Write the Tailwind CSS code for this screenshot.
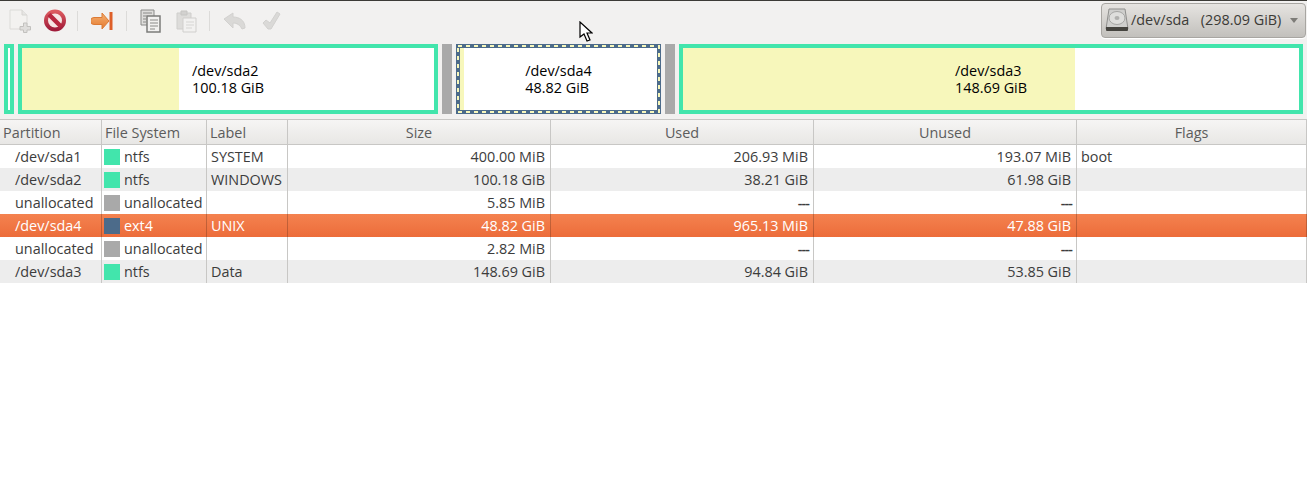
<!DOCTYPE html>
<html lang="en">
  <head>
    <meta charset="UTF-8" />
    <script src="https://cdn.jsdelivr.net/npm/@tailwindcss/browser@4"></script>
    <title>GParted</title>
  </head>
  <body class="relative h-[493px] w-[1307px] overflow-hidden bg-white text-[14.4px] text-[#3c3c3c] font-['Open_Sans',sans-serif]">
    <!-- toolbar -->
    <div class="flex h-[40px] items-center border-t border-[#3c3b37] bg-[#f2f1f0] pl-[9px] pr-px">
      <svg class="h-[24px] w-[22px]" viewBox="0 0 22 24">
        <path d="M1 1h12l5 5v14H1z" fill="#f3f2f0" stroke="#dcdbd8" />
        <path d="M13 1v5h5" fill="#e6e5e3" stroke="#d6d5d2" />
        <path d="M14.5 14h3.5v3.5h3.5V21H18v2.500h-3.500V21H11v-3.500h3.500z" fill="#dfdedc" stroke="#c2c1be" />
      </svg>
      <svg class="ml-[12px] h-[24px] w-[24px]" viewBox="0 0 24 24">
        <defs>
          <linearGradient id="stop" x1="0" y1="0" x2="0" y2="1">
            <stop offset="0" stop-color="#dc5a5f" />
            <stop offset="1" stop-color="#a01c3a" />
          </linearGradient>
          <linearGradient id="arrow" x1="0" y1="0" x2="0" y2="1">
            <stop offset="0" stop-color="#f4b070" />
            <stop offset="1" stop-color="#e57a30" />
          </linearGradient>
        </defs>
        <circle cx="12" cy="11.500" r="9" fill="#f6e6e4" stroke="url(#stop)" stroke-width="4" />
        <path d="M6 5.500l12 12" stroke="#b8283f" stroke-width="4.500" />
      </svg>
      <div class="ml-[10px] h-[20px] w-px bg-[#dcdbd9]"></div>
      <svg class="ml-[13px] h-[20px] w-[23px]" viewBox="0 0 23 20">
        <path d="M3 6.500h8V2l7 8-7 8v-4.500H3a3.500 3.500 0 0 1 0-7z" fill="url(#arrow)" stroke="#dc7a34" />
        <path d="M20 1v18" stroke="#de5f28" stroke-width="3" />
      </svg>
      <div class="ml-[12px] h-[20px] w-px bg-[#dcdbd9]"></div>
      <svg class="ml-[13px] h-[24px] w-[21px]" viewBox="0 0 21 24">
        <path d="M1 1h13v15H1z" fill="#dedddb" stroke="#8a8a88" />
        <path d="M7 7h13v16H7z" fill="#f2f1f0" stroke="#7c7c7a" stroke-width="1.500" />
        <path d="M3 4h9M3 7h3M3 10h3M3 13h3M10 11h8M10 14h8M10 17h8M10 20h5" stroke="#8a8a88" />
      </svg>
      <svg class="ml-[15px] h-[24px] w-[21px]" viewBox="0 0 21 24">
        <path d="M1 4h14v16H1z" fill="#dddcda" stroke="#cfcecc" />
        <path d="M5 2h6v4H5z" fill="#d2d1cf" stroke="#c6c5c3" />
        <path d="M7 9h13v14H7z" fill="#f2f1f0" stroke="#d0cfcd" />
        <path d="M10 13h8M10 16h8M10 19h6" stroke="#d6d5d3" />
      </svg>
      <div class="ml-[12px] h-[20px] w-px bg-[#dcdbd9]"></div>
      <svg class="ml-[13px] h-[18px] w-[23px]" viewBox="0 0 23 18">
        <path d="M1 7l9-6v4c6 0 12 3 12 11l-3 1c-2-4-5-6-9-6v5z" fill="#dad9d7" stroke="#d2d1cf" stroke-linejoin="round" />
      </svg>
      <svg class="ml-[16px] h-[20px] w-[20px]" viewBox="0 0 20 20">
        <path d="M1 12l3-3 4 3 7-11 3 2-9 15h-3z" fill="#dad9d7" stroke="#d2d1cf" stroke-linejoin="round" />
      </svg>
      <!-- disk selector -->
      <div class="ml-auto mt-[-1px] flex h-[35px] w-[205px] items-center rounded-[4px] border border-[#a8a6a2] bg-gradient-to-b from-[#e6e4e1] to-[#c2c0bc] pl-[3px] text-[#3c3b37] shadow-[0_1px_0_#fff]">
        <svg class="h-[24px] w-[24px]" viewBox="0 0 24 24">
          <path d="M4 1h16l3 20H1z" fill="#cfcfcd" stroke="#8f8f8d" />
          <path d="M1 19h22v3a1 1 0 0 1-1 1H2a1 1 0 0 1-1-1z" fill="#45443f" />
          <ellipse cx="12" cy="10" rx="8" ry="6.500" fill="#dededc" stroke="#a5a5a3" />
          <ellipse cx="12" cy="10" rx="2.500" ry="2" fill="#b0b0ae" />
        </svg>
        <span class="ml-[2px] whitespace-pre">/dev/sda  <span class="ml-[4px]">(298.09 GiB)</span></span>
        <span class="ml-auto mr-[7px] h-0 w-0 border-x-[4px] border-t-[5px] border-x-transparent border-t-[#7d7c78]"></span>
      </div>
    </div>

    <!-- partition graph -->
    <div class="flex h-[79px] items-start gap-[4px] bg-[#f2f1f0] pl-[4px] pr-[4px] pt-[4px] leading-[17px] text-black">
      <div class="h-[70px] w-[10px] border-[4px] border-[#42e5ac] bg-white"></div>
      <div class="relative flex h-[70px] w-[420px] items-center justify-center border-[4px] border-[#42e5ac] bg-white">
        <div class="absolute inset-y-0 left-0 w-[157px] bg-[#f7f7bb]"></div>
        <div class="relative">/dev/sda2<br />100.18 GiB</div>
      </div>
      <div class="h-[70px] w-[10px] bg-[#a9a9a9]"></div>
      <div class="relative flex h-[70px] w-[205px] items-center justify-center border-[4px] border-[#4c6b8a] bg-white">
        <div class="absolute inset-y-0 left-0 w-[4px] bg-[#f7f7bb]"></div>
        <!-- dashed focus outline -->
        <svg class="absolute -left-[4px] -top-[4px] h-[70px] w-[205px]" viewBox="0 0 205 70" fill="none">
          <rect x="2" y="2" width="201" height="66" stroke="#f7f7bb" stroke-width="2" stroke-dasharray="4 4" />
        </svg>
        <div class="relative">/dev/sda4<br />48.82 GiB</div>
      </div>
      <div class="h-[70px] w-[10px] bg-[#a9a9a9]"></div>
      <div class="relative flex h-[70px] w-[624px] items-center justify-center border-[4px] border-[#42e5ac] bg-white">
        <div class="absolute inset-y-0 left-0 w-[392px] bg-[#f7f7bb]"></div>
        <div class="relative">/dev/sda3<br />148.69 GiB</div>
      </div>
    </div>

    <!-- partition list -->
    <div class="grid grid-cols-[102px_105px_81px_263px_263px_263px_230px] grid-rows-[26px_repeat(6,23px)] leading-[23px] [&>div]:border-r [&>div]:border-[#c8c7c5] [&>div]:px-[4px] [&>div]:whitespace-nowrap">
      <div class="flex items-center border-y bg-gradient-to-b from-[#f6f5f4] to-[#e8e7e5] !px-[3px] text-[#5c5c5c]">Partition</div>
      <div class="flex items-center border-y bg-gradient-to-b from-[#f6f5f4] to-[#e8e7e5] !px-[3px] text-[#5c5c5c]">File System</div>
      <div class="flex items-center border-y bg-gradient-to-b from-[#f6f5f4] to-[#e8e7e5] !px-[3px] text-[#5c5c5c]">Label</div>
      <div class="flex items-center justify-center border-y bg-gradient-to-b from-[#f6f5f4] to-[#e8e7e5] text-[#5c5c5c]">Size</div>
      <div class="flex items-center justify-center border-y bg-gradient-to-b from-[#f6f5f4] to-[#e8e7e5] text-[#5c5c5c]">Used</div>
      <div class="flex items-center justify-center border-y bg-gradient-to-b from-[#f6f5f4] to-[#e8e7e5] text-[#5c5c5c]">Unused</div>
      <div class="flex items-center justify-center border-y bg-gradient-to-b from-[#f6f5f4] to-[#e8e7e5] text-[#5c5c5c]">Flags</div>

      <div class="!pl-[15px]">/dev/sda1</div>
      <div class="flex items-center gap-[4px] !pl-[2px]"><span class="size-[16px] shrink-0 bg-[#42e5ac]"></span>ntfs</div>
      <div>SYSTEM</div>
      <div class="!pr-[5px] text-right">400.00 MiB</div>
      <div class="!pr-[5px] text-right">206.93 MiB</div>
      <div class="!pr-[5px] text-right">193.07 MiB</div>
      <div>boot</div>

      <div class="bg-[#ededed] !pl-[15px]">/dev/sda2</div>
      <div class="flex items-center gap-[4px] bg-[#ededed] !pl-[2px]"><span class="size-[16px] shrink-0 bg-[#42e5ac]"></span>ntfs</div>
      <div class="bg-[#ededed]">WINDOWS</div>
      <div class="bg-[#ededed] !pr-[5px] text-right">100.18 GiB</div>
      <div class="bg-[#ededed] !pr-[5px] text-right">38.21 GiB</div>
      <div class="bg-[#ededed] !pr-[5px] text-right">61.98 GiB</div>
      <div class="bg-[#ededed]"></div>

      <div class="!pl-[15px]">unallocated</div>
      <div class="flex items-center gap-[4px] !pl-[2px]"><span class="size-[16px] shrink-0 bg-[#a9a9a9]"></span>unallocated</div>
      <div></div>
      <div class="!pr-[5px] text-right">5.85 MiB</div>
      <div class="text-right font-semibold tracking-[-0.9px]">---</div>
      <div class="text-right font-semibold tracking-[-0.9px]">---</div>
      <div></div>

      <div class="bg-gradient-to-b from-[#f4824f] to-[#ec6c3a] !border-black/20 !pl-[15px] text-white">/dev/sda4</div>
      <div class="flex items-center gap-[4px] bg-gradient-to-b from-[#f4824f] to-[#ec6c3a] !border-black/20 !pl-[2px] text-white"><span class="size-[16px] shrink-0 bg-[#4c6b8a]"></span>ext4</div>
      <div class="bg-gradient-to-b from-[#f4824f] to-[#ec6c3a] !border-black/20 text-white">UNIX</div>
      <div class="bg-gradient-to-b from-[#f4824f] to-[#ec6c3a] !border-black/20 !pr-[5px] text-right text-white">48.82 GiB</div>
      <div class="bg-gradient-to-b from-[#f4824f] to-[#ec6c3a] !border-black/20 !pr-[5px] text-right text-white">965.13 MiB</div>
      <div class="bg-gradient-to-b from-[#f4824f] to-[#ec6c3a] !border-black/20 !pr-[5px] text-right text-white">47.88 GiB</div>
      <div class="bg-gradient-to-b from-[#f4824f] to-[#ec6c3a] !border-black/20"></div>

      <div class="!pl-[15px]">unallocated</div>
      <div class="flex items-center gap-[4px] !pl-[2px]"><span class="size-[16px] shrink-0 bg-[#a9a9a9]"></span>unallocated</div>
      <div></div>
      <div class="!pr-[5px] text-right">2.82 MiB</div>
      <div class="text-right font-semibold tracking-[-0.9px]">---</div>
      <div class="text-right font-semibold tracking-[-0.9px]">---</div>
      <div></div>

      <div class="bg-[#ededed] !pl-[15px]">/dev/sda3</div>
      <div class="flex items-center gap-[4px] bg-[#ededed] !pl-[2px]"><span class="size-[16px] shrink-0 bg-[#42e5ac]"></span>ntfs</div>
      <div class="bg-[#ededed]">Data</div>
      <div class="bg-[#ededed] !pr-[5px] text-right">148.69 GiB</div>
      <div class="bg-[#ededed] !pr-[5px] text-right">94.84 GiB</div>
      <div class="bg-[#ededed] !pr-[5px] text-right">53.85 GiB</div>
      <div class="bg-[#ededed]"></div>
    </div>

    <!-- mouse pointer -->
    <svg class="absolute left-[579px] top-[21px] h-[21px] w-[14px]" viewBox="0 0 14 21">
      <path d="M1 1v15l4-3 3 7 3-1-3-7h5z" fill="#fff" stroke="#000" stroke-width="1.200" />
    </svg>
  </body>
</html>
